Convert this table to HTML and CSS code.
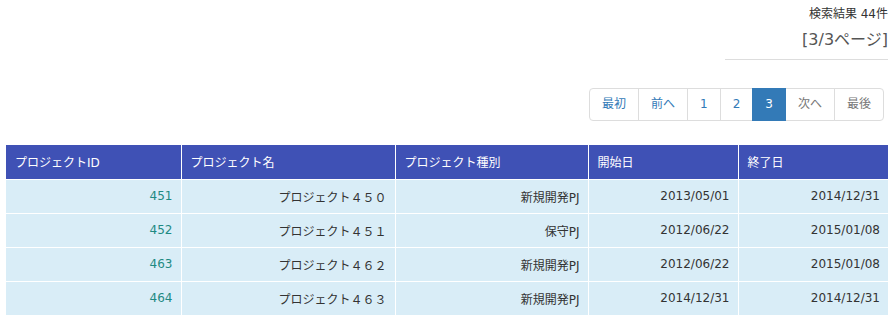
FILE: index.html
```html
<!DOCTYPE html>
<html lang="ja">
<head>
<meta charset="utf-8">
<link rel="stylesheet" href="styles.css">
</head>
<body>
<div class="page">
  <div class="result-info">
    <div class="count">検索結果 44件</div>
    <div class="pageno">[3/3ページ]</div>
  </div>
  <nav class="pager">
    <ul class="pagination">
      <li><a>最初</a></li>
      <li><a>前へ</a></li>
      <li><a>1</a></li>
      <li><a>2</a></li>
      <li class="active"><a>3</a></li>
      <li class="disabled"><a>次へ</a></li>
      <li class="disabled"><a>最後</a></li>
    </ul>
  </nav>
  <table class="grid">
    <colgroup>
      <col class="c1"><col class="c2"><col class="c3"><col class="c4"><col class="c5">
    </colgroup>
    <thead>
      <tr><th>プロジェクトID</th><th>プロジェクト名</th><th>プロジェクト種別</th><th>開始日</th><th>終了日</th></tr>
    </thead>
    <tbody>
      <tr><td><a class="id">451</a></td><td>プロジェクト４５０</td><td>新規開発PJ</td><td>2013/05/01</td><td>2014/12/31</td></tr>
      <tr><td><a class="id">452</a></td><td>プロジェクト４５１</td><td>保守PJ</td><td>2012/06/22</td><td>2015/01/08</td></tr>
      <tr><td><a class="id">463</a></td><td>プロジェクト４６２</td><td>新規開発PJ</td><td>2012/06/22</td><td>2015/01/08</td></tr>
      <tr><td><a class="id">464</a></td><td>プロジェクト４６３</td><td>新規開発PJ</td><td>2014/12/31</td><td>2014/12/31</td></tr>
    </tbody>
  </table>
</div>
</body>
</html>
```
FILE: styles.css
```css
html, body {
  margin: 0;
  padding: 0;
  background: #fff;
}
body {
  font-family: "DejaVu Sans", "Noto Sans CJK JP", sans-serif;
  color: #333;
}
.page {
  padding: 5px 8px 0 6px;
}
.result-info {
  display: flex;
  flex-direction: column;
  align-items: flex-end;
}
.count {
  font-size: 12px;
  line-height: 18px;
  color: #333;
}
.pageno {
  font-size: 16px;
  line-height: 26px;
  color: #555;
  width: 163px;
  text-align: right;
  padding: 4px 0 6px;
  border-bottom: 1px solid #ddd;
}
.pager {
  display: flex;
  justify-content: flex-end;
  margin: 28px 4px 0 0;
}
.pagination {
  display: flex;
  list-style: none;
  margin: 0;
  padding: 0;
}
.pagination li a {
  display: block;
  box-sizing: border-box;
  height: 33px;
  line-height: 31px;
  padding: 0 12px;
  font-size: 12px;
  color: #337ab7;
  background: #fff;
  border: 1px solid #ddd;
  margin-left: -1px;
  text-align: center;
}
.pagination li:first-child a {
  margin-left: 0;
  border-radius: 4px 0 0 4px;
}
.pagination li:last-child a {
  border-radius: 0 4px 4px 0;
}
.pagination li.active a {
  background: #337ab7;
  border-color: #337ab7;
  color: #fff;
  position: relative;
  z-index: 1;
}
.pagination li.disabled a {
  color: #777;
}
.grid {
  margin-top: 24px;
  width: 882px;
  border-collapse: collapse;
  table-layout: fixed;
  font-size: 12px;
}
.c1 { width: 175px; }
.c2 { width: 214px; }
.c3 { width: 193px; }
.c4 { width: 150px; }
.c5 { width: 150px; }
.grid th {
  background: #3f51b5;
  color: #fff;
  font-weight: normal;
  text-align: left;
  height: 34px;
  padding: 0 9px;
  border-left: 1px solid #fff;
  box-sizing: border-box;
}
.grid th:first-child,
.grid td:first-child {
  border-left: none;
}
.grid td {
  background: #d9edf7;
  text-align: right;
  height: 34px;
  padding: 0 8px;
  border-left: 1px solid #fff;
  border-top: 1px solid #fff;
  box-sizing: border-box;
  color: #333;
}
.grid a.id {
  color: #1f8a83;
}
```
